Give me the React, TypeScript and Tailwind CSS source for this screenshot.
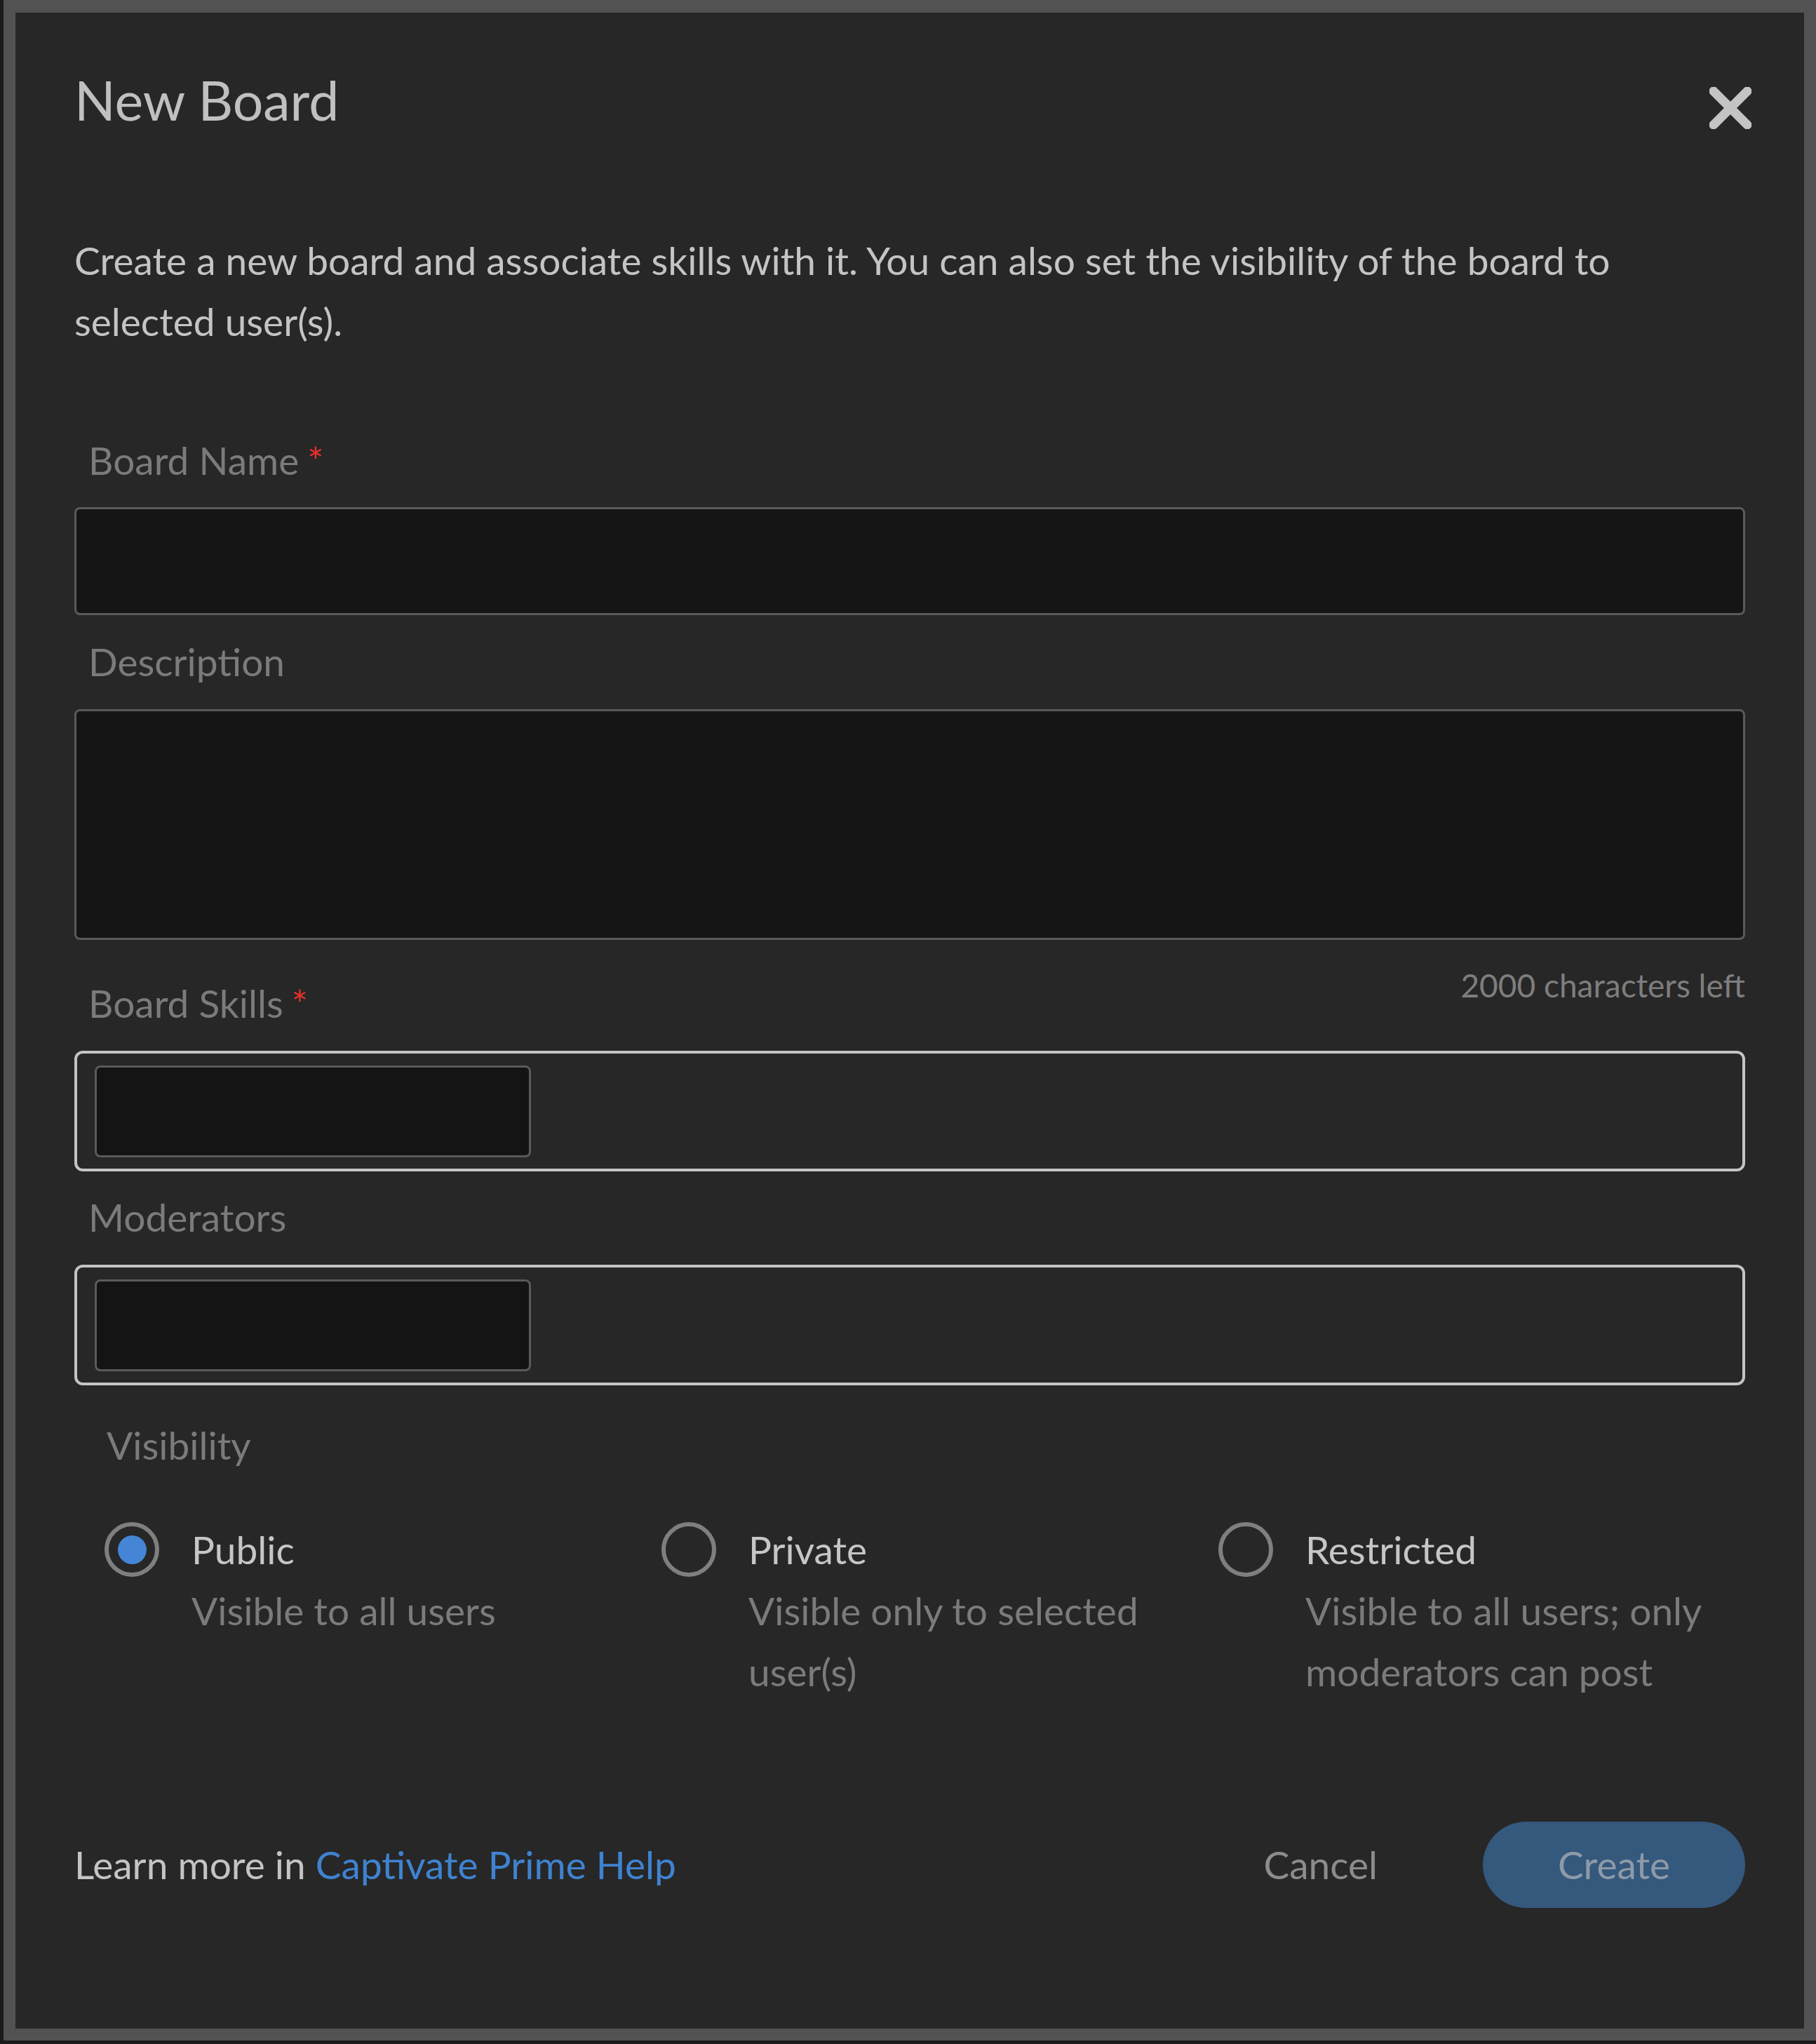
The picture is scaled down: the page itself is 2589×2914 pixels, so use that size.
const OPTIONS = [
  { id: 'public', title: 'Public', body: 'Visible to all users', checked: true },
  { id: 'private', title: 'Private', body: 'Visible only to selected user(s)', checked: false },
  { id: 'restricted', title: 'Restricted', body: 'Visible to all users; only moderators can post', checked: false },
];

function Label({ text, required }: { text: string; required?: boolean }) {
  return (
    <div className="flex items-start text-[55px] leading-[64px] text-[#7b7b7b]">
      <span>{text}</span>
      {required && <span className="ml-[12px] text-[#e8302a]">*</span>}
    </div>
  );
}

function TagField() {
  return (
    <div className="mt-[36px] flex h-[172px] items-center rounded-[12px] border-[4px] border-[#c4c4c4] pl-[25px]">
      <div className="h-[131px] w-[622px] rounded-[8px] border-[3px] border-[#5a5a5a] bg-[#141414]" />
    </div>
  );
}

function CloseIcon() {
  return (
    <svg viewBox="0 0 60 60" className="h-[60px] w-[60px]">
      <path d="M6 6 L54 54 M54 6 L6 54" stroke="#c4c4c4" strokeWidth="13" strokeLinecap="round" />
    </svg>
  );
}

export default function App() {
  return (
    <div className="h-[2914px] w-[2589px] bg-[#1b1b1b] pb-[5px] pl-[5px] font-['Lato',sans-serif]">
      <div className="flex h-full flex-col border-[17px] border-t-[18px] border-[#525252] bg-[#272727] px-[84px] pt-[78px]">
        <div className="flex items-start justify-between">
          <h1 className="text-[77px] leading-[92px] text-[#c0c0c0]">New Board</h1>
          <button className="-mr-[9px] mt-[28px]">
            <CloseIcon />
          </button>
        </div>

        <p className="mt-[140px] text-[55px] leading-[87px] text-[#c4c4c4]">
          Create a new board and associate skills with it. You can also set the visibility of the board to
          selected user(s).
        </p>

        <div className="ml-[20px] mt-[122px]">
          <Label text="Board Name" required />
        </div>
        <div className="mt-[35px] h-[154px] rounded-[8px] border-[3px] border-[#5a5a5a] bg-[#151515]" />

        <div className="ml-[20px] mt-[34px]">
          <Label text="Description" />
        </div>
        <div className="mt-[36px] h-[329px] rounded-[8px] border-[3px] border-[#5a5a5a] bg-[#151515]" />

        <div className="mt-[36px] flex items-start justify-between">
          <div className="ml-[20px] mt-[22px]">
            <Label text="Board Skills" required />
          </div>
          <span className="text-[46px] leading-[58px] text-[#7e7e7e]">2000 characters left</span>
        </div>
        <TagField />

        <div className="ml-[20px] mt-[33px]">
          <Label text="Moderators" />
        </div>
        <TagField />

        <div className="ml-[46px] mt-[53px]">
          <Label text="Visibility" />
        </div>

        <div className="mt-[74px] grid grid-cols-3">
          {OPTIONS.map((o) => (
            <div key={o.id} className="flex gap-[46px] pl-[43px]">
              <span className="mt-[4px] flex h-[78px] w-[78px] shrink-0 items-center justify-center rounded-full border-[6px] border-[#7f7f7f]">
                {o.checked && <span className="h-[41px] w-[41px] rounded-full bg-[#4485d5]" />}
              </span>
              <div className="text-[55px] leading-[87px]">
                <div className="text-[#c6c6c6]">{o.title}</div>
                <div className="text-[#7b7b7b]">{o.body}</div>
              </div>
            </div>
          ))}
        </div>

        <div className="mt-[170px] flex items-center">
          <p className="text-[55px] text-[#c4c4c4]">
            Learn more in <span className="text-[#3f83d1]">Captivate Prime Help</span>
          </p>
          <button className="ml-auto mr-[150px] text-[55px] text-[#8c8c8c]">Cancel</button>
          <button className="h-[123px] w-[374px] rounded-full bg-[#35587d] text-[55px] text-[#8d9aa8]">
            Create
          </button>
        </div>
      </div>
    </div>
  );
}
